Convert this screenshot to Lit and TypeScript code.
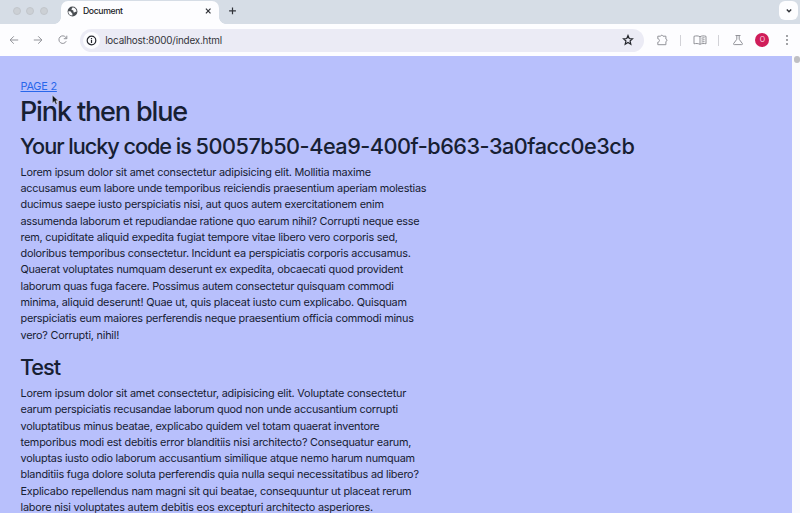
import { LitElement, html, css, svg } from "lit";
import { customElement } from "lit/decorators.js";
import { styleMap } from "lit/directives/style-map.js";

type Line = [text: string, tracking: number];

const INTRO: Line[] = [
  ["Lorem ipsum dolor sit amet consectetur adipisicing elit. Mollitia maxime", -0.211],
  ["accusamus eum labore unde temporibus reiciendis praesentium aperiam molestias", -0.247],
  ["ducimus saepe iusto perspiciatis nisi, aut quos autem exercitationem enim", -0.23],
  ["assumenda laborum et repudiandae ratione quo earum nihil? Corrupti neque esse", -0.247],
  ["rem, cupiditate aliquid expedita fugiat tempore vitae libero vero corporis sed,", -0.218],
  ["doloribus temporibus consectetur. Incidunt ea perspiciatis corporis accusamus.", -0.232],
  ["Quaerat voluptates numquam deserunt ex expedita, obcaecati quod provident", -0.233],
  ["laborum quas fuga facere. Possimus autem consectetur quisquam commodi", -0.247],
  ["minima, aliquid deserunt! Quae ut, quis placeat iusto cum explicabo. Quisquam", -0.223],
  ["perspiciatis eum maiores perferendis neque praesentium officia commodi minus", -0.236],
  ["vero? Corrupti, nihil!", -0.214],
];
const TEST: Line[] = [
  ["Lorem ipsum dolor sit amet consectetur, adipisicing elit. Voluptate consectetur", -0.2],
  ["earum perspiciatis recusandae laborum quod non unde accusantium corrupti", -0.245],
  ["voluptatibus minus beatae, explicabo quidem vel totam quaerat inventore", -0.225],
  ["temporibus modi est debitis error blanditiis nisi architecto? Consequatur earum,", -0.209],
  ["voluptas iusto odio laborum accusantium similique atque nemo harum numquam", -0.235],
  ["blanditiis fuga dolore soluta perferendis quia nulla sequi necessitatibus ad libero?", -0.219],
  ["Explicabo repellendus nam magni sit qui beatae, consequuntur ut placeat rerum", -0.234],
  ["labore nisi voluptates autem debitis eos excepturi architecto asperiores.", -0.216],
];

const paragraph = (lines: Line[]) =>
  html`<p>${lines.map(([text, tracking]) => html`<span class="line" style=${styleMap({ letterSpacing: `${tracking}px` })}>${text}</span>`)}</p>`;

const icon = (cls: string, w: number, h: number, body: unknown) =>
  html`<svg class="icon ${cls}" width=${w} height=${h} viewBox="0 0 ${w} ${h}">${body}</svg>`;

@customElement("browser-tabs")
class BrowserTabs extends LitElement {
  static styles = css`
    :host { display: flex; height: 24px; background: #d6dde6; color: #202124; box-sizing: border-box; }
    .lights { display: flex; gap: 5.4px; padding: 7px 0 0 13px; width: 48px; box-sizing: border-box; flex: none; }
    .lights i { width: 8px; height: 8px; box-sizing: border-box; border-radius: 50%; background: #ccd0d5; border: 0.6px solid #c2c6cb; flex: none; }
    .tab { position: relative; display: flex; align-items: center; width: 158px; height: 23px; margin: 1px 0 0 13px; padding: 0 7px 2px 6px; box-sizing: border-box; background: #fdfdff; border-radius: 7px 7px 0 0; }
    .tab::before, .tab::after { content: ""; position: absolute; bottom: 0; width: 7px; height: 7px; }
    .tab::before { left: -7px; background: radial-gradient(circle at 0 0, transparent 6.6px, #fdfdff 7.2px); }
    .tab::after { right: -7px; background: radial-gradient(circle at 100% 0, transparent 6.6px, #fdfdff 7.2px); }
    .title { flex: 1; margin: -1px 0 0 5px; font-size: 8.7px; line-height: 12px; letter-spacing: -0.4px; font-weight: 450; }
    .plus { margin: 6px 0 0 9px; }
    .search { display: flex; margin: 1px 2px 0 auto; width: 19px; height: 19px; border-radius: 6px; background: #fdfdff; align-items: center; justify-content: center; }
    .icon { display: block; flex: none; fill: none; stroke: #303238; stroke-width: 1.2; }
    .close { margin-top: -1px; }
  `;
  render() {
    return html`
      <div class="lights"><i></i><i></i><i></i></div>
      <div class="tab">
        ${icon("close", 11, 11, svg`<circle cx="5.5" cy="5.5" r="4.9" fill="#484c51" stroke="none"/><path d="M1.3 5.4c1.5-.3 2.8.2 3.1 1.1.2.8 1.1.7 1 1.5v1.5C3 9.4 1.2 7.7 1.3 5.4M5.3 1.5c.3 1-1.1 1-.9 2 .2.7 1.2.4 1.8.9.8.8-.3 1.7.8 2 .9.2 1.3-.9 2.5-.6.3-2.2-1.6-4.3-4.2-4.3" fill="#fdfdff" stroke="none"/>`)}
        <span class="title">Document</span>
        ${icon("close", 7, 8, svg`<path d="M.9 1.7 5.5 6.3M5.5 1.7.9 6.3"/>`)}
      </div>
      ${icon("plus", 9, 9, svg`<path d="M4.5 1.4v6.8M1.1 4.8h6.8"/>`)}
      <div class="search">${icon("", 8, 6, svg`<path d="m1.8 1.6 2.2 2.2 2.2-2.2" stroke-width="1.4"/>`)}</div>
    `;
  }
}

@customElement("browser-toolbar")
class BrowserToolbar extends LitElement {
  static styles = css`
    :host { display: flex; align-items: center; height: 32px; box-sizing: border-box; background: #fdfdff; padding: 0 8px 0 8px; }
    .icon { display: block; flex: none; fill: none; stroke: #929399; stroke-width: 1; }
    .fwd { margin-left: 12px; }
    .reload { margin-left: 12.6px; }
    .omnibox { display: flex; align-items: center; width: 564px; height: 23px; margin-left: 11.4px; padding: 0 10px 0 3px; box-sizing: border-box; border-radius: 12px; background: #ebebf5; flex: none; }
    .info { width: 17px; height: 17px; display: flex; align-items: center; justify-content: center; border-radius: 50%; background: #fdfdff; }
    .info .icon, .star { stroke: #25272d; stroke-width: 1.2; }
    .url { flex: 1; margin: 0 0 0 5.2px; color: #33343a; font-size: 9.9px; line-height: 14px; letter-spacing: -0.19px; }
    .puzzle { margin-left: 12.5px; }
    .rule { width: 1px; height: 11px; background: #d2d2d7; margin-left: 10.5px; flex: none; }
    .book { margin-left: 12.5px; }
    .flask { margin-left: 13.5px; }
    .avatar { display: flex; align-items: center; justify-content: center; width: 14px; height: 14px; margin-left: 11px; border-radius: 50%; background: #cf1d59; color: #ffdce8; font-size: 7px; line-height: 14px; flex: none; }
    .more { margin-left: 15.5px; fill: #77787d; stroke: none; }
  `;
  render() {
    return html`
      ${icon("", 12, 12, svg`<path d="M10.2 6H2.2M5.8 2.3 2.1 6l3.7 3.7"/>`)}
      ${icon("fwd", 12, 12, svg`<path d="M1.8 6h8M6.2 2.3 9.9 6 6.2 9.7"/>`)}
      ${icon("reload", 12, 12, svg`<path d="M9.2 7.2A3.8 3.8 0 1 1 8.8 3.4L9.7 4.5M9.8 1.7v3H6.8"/>`)}
      <div class="omnibox">
        <span class="info">${icon("", 11, 11, svg`<circle cx="5.5" cy="5.5" r="4.3"/><path d="M5.5 4.9v3M5.5 3v1.2"/>`)}</span>
        <span class="url">localhost:8000/index.html</span>
        ${icon("star", 12, 12, svg`<path d="m6 1.5 1.25 3 3.25.3L8.05 7l.75 3.2L6 8.5l-2.8 1.7L3.95 7 1.5 4.8l3.25-.3Z"/>`)}
      </div>
      ${icon("puzzle", 13, 12, svg`<path d="M1.8 2.2H4.6C4.8.9 6.8.9 7 2.2H9.9V5.1C11.3 5.3 11.3 7.3 9.9 7.5V10.7H1.8V8.2C4 8 4 5 1.8 4.8Z"/>`)}
      <i class="rule"></i>
      ${icon("book", 14, 12, svg`<path d="M7 2.7C5.2 1.7 3 1.7 1 2.3v7.5c2-.5 4.2-.4 6 .5 1.8-.9 4-1 6-.5V2.3c-2-.6-4.2-.6-6 .4v7.6M8.5 4.2l3-.5M8.5 6.1l3-.4M8.5 8l3-.4"/>`)}
      <i class="rule"></i>
      ${icon("flask", 12, 12, svg`<path d="M3.5 1.5h5M4.8 1.5v3.8L1.6 9.6q-.4.9.7 1h7.4q1.1-.1.7-1L7.2 5.3V1.5"/>`)}
      <span class="avatar">O</span>
      ${icon("more", 4, 12, svg`<circle cx="2" cy="2" r=".9"/><circle cx="2" cy="6" r=".9"/><circle cx="2" cy="10" r=".9"/>`)}
    `;
  }
}

@customElement("app-root")
class AppRoot extends LitElement {
  static styles = css`
    :host { display: flex; flex-direction: column; position: relative; width: 800px; height: 513px; overflow: hidden; font-family: Inter, "Liberation Sans", sans-serif; background: #fdfdff; }
    browser-tabs, browser-toolbar { flex: none; }
    .viewport { flex: 1; min-height: 0; display: flex; }
    .page { flex: 1; background: #b8c0fc; color: #172033; padding: 22.4px 0 0 20.5px; overflow: hidden; box-sizing: border-box; white-space: nowrap; }
    .link { display: block; width: max-content; color: #2867eb; font-size: 10.9px; line-height: 16.3px; letter-spacing: -0.22px; text-decoration: underline; text-underline-offset: 1px; }
    h1, h2 { font-weight: 530; margin: 0 0 0 -0.6px; }
    h1 { font-size: 27px; line-height: 33px; letter-spacing: -1.13px; }
    h2 { font-size: 21.7px; line-height: 26px; margin-top: 5px; letter-spacing: -1.04px; }
    .code { letter-spacing: -0.5px; }
    p { margin: 5px 0 0; font-size: 10.87px; line-height: 16.29px; }
    .test { margin-top: 11px; }
    .line { display: block; }
    .scroll { width: 8px; background: #fafafc; display: flex; justify-content: flex-end; box-sizing: border-box; }
    .thumb { width: 6px; height: 7px; border-radius: 3px; background: #bfbfc3; }
    .cursor { position: absolute; left: 51px; top: 94px; }
  `;
  render() {
    return html`
      <browser-tabs></browser-tabs>
      <browser-toolbar></browser-toolbar>
      <div class="viewport">
        <main class="page">
          <a class="link">PAGE 2</a>
          <h1>Pink then blue</h1>
          <h2>Your lucky code is <span class="code">50057b50-4ea9-400f-b663-3a0facc0e3cb</span></h2>
          ${paragraph(INTRO)}
          <h2 class="test">Test</h2>
          ${paragraph(TEST)}
        </main>
        <div class="scroll"><div class="thumb"></div></div>
      </div>
      <svg class="cursor" width="9" height="12" viewBox="0 0 9 12"><path d="M1.3 1v8.2l2-1.8 1.3 3 1.6-.7-1.3-2.9h2.5Z" fill="#111318" stroke="#e5e7f5" stroke-width=".6"/></svg>
    `;
  }
}
